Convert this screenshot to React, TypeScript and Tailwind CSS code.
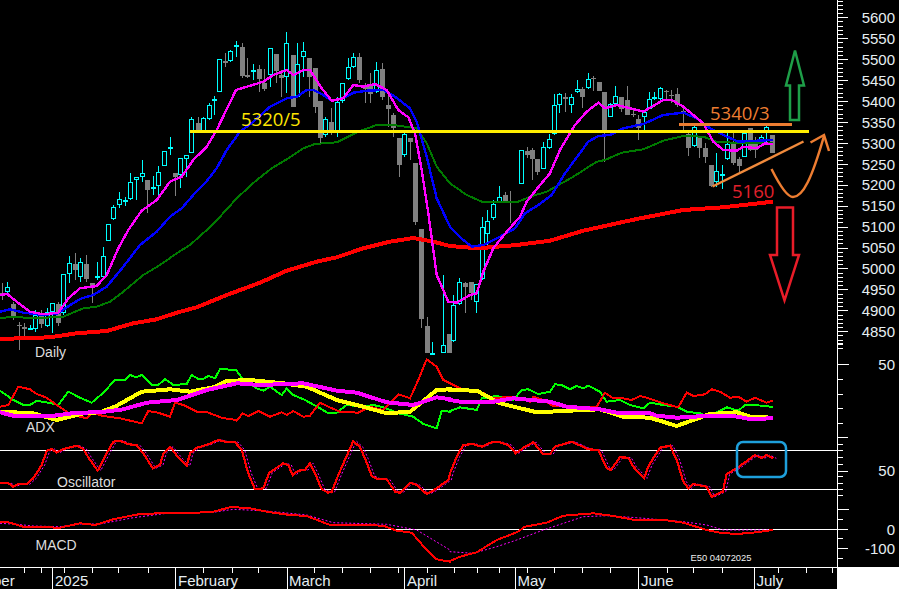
import React from "react";

type C = [number, number, number, number, number, 0 | 1];
// [x, high, top, bottom, low, 1 = cyan / 0 = gray] in 3x crop coordinates
const candlesA: C[] = [
  [6,850,878,886,900,0],[22,845,860,876,880,1],[39,905,912,950,960,0],[56,965,975,978,1050,0],[73,970,982,988,1010,0],[90,975,983,985,990,1],
  [105,930,945,988,995,1],[124,930,945,972,985,0],[140,925,935,977,980,1],[157,910,910,935,998,1],[174,905,912,968,978,0],[190,823,823,940,945,1],
  [207,768,790,823,850,1],[225,760,793,810,840,0],[240,775,785,830,845,1],[259,765,792,837,845,0],[275,850,850,860,908,0],[291,785,829,833,840,1],
  [308,742,767,832,835,1],[325,672,672,724,724,1],[340,615,620,658,660,1],[356,576,598,616,625,1],[374,590,600,604,618,1],[390,520,547,598,600,1],
  [407,530,532,541,600,1],[425,480,520,530,545,1],[442,540,540,570,638,0],[459,528,562,568,585,1],[475,498,517,557,587,1],[491,454,454,497,497,1],
  [509,412,442,446,465,1],[526,520,520,532,587,0],[541,475,475,525,565,1],[558,466,466,478,530,1],[574,350,358,458,460,1],[594,350,370,392,395,0],
  [610,350,355,392,400,1],[627,308,316,356,360,1],[643,288,298,304,345,1],[658,178,178,277,277,1],[675,160,184,188,200,0],[691,150,154,182,185,1],
  [708,124,136,139,170,1],[727,130,142,228,235,0],[742,175,226,230,235,0],[759,192,211,217,240,1],[776,195,208,237,275,0],[793,208,248,266,272,0],
  [810,145,145,225,260,1],[828,163,163,213,250,0],[843,210,225,235,290,0],[859,97,130,232,280,1],[878,165,165,320,320,0],[892,130,193,290,295,1],
  [909,127,154,170,230,1],[928,175,175,230,290,0],[945,205,205,320,340,0],[961,303,303,415,430,0],[976,350,357,404,410,1],[994,325,366,390,405,0],
  [1010,290,305,395,412,1],[1026,248,248,303,310,1],[1043,175,200,238,240,1],[1060,160,172,200,205,1],[1078,160,172,240,250,0],[1094,250,262,268,310,0],
  [1111,220,252,283,310,0],[1128,185,210,277,280,1],[1146,190,208,290,300,0],[1163,280,316,326,380,0],[1179,340,345,385,410,0],[1196,415,415,495,532,0],
  [1211,400,403,466,470,1],[1229,415,415,425,480,0],[1246,490,490,665,675,0],[1263,688,688,957,985,0],[1280,950,978,1058,1058,0],[1296,1025,1058,1058,1058,1],
  [1330,825,1035,1058,1058,1],[1347,1002,1002,1058,1058,0],
];
const candlesB: C[] = [
  [10,885,915,1022,1025,1],[28,835,845,912,915,1],[45,845,850,860,940,0],[63,845,847,880,900,0],[79,853,853,905,938,1],[96,652,682,838,840,1],
  [112,630,662,703,750,1],[129,600,612,655,660,1],[146,558,592,605,608,1],[165,575,585,602,605,0],[181,572,602,604,670,0],[213,451,451,553,553,1],
  [230,442,452,466,475,0],[247,445,451,476,540,0],[262,477,477,515,525,0],[279,425,442,506,508,1],[296,403,418,444,447,1],[312,282,315,403,405,1],
  [328,280,283,316,340,1],[346,280,292,297,335,0],[362,282,290,315,340,1],[380,240,268,276,280,1],[396,262,268,292,325,0],[413,220,238,265,268,1],
  [430,228,234,237,272,0],[446,246,246,272,272,0],[463,275,275,390,485,0],[480,310,312,350,350,1],[496,258,287,312,314,1],[514,292,292,328,335,0],
  [531,258,300,345,345,0],[548,330,342,345,352,0],[565,345,358,385,420,0],[581,330,335,350,390,1],[597,275,298,326,328,1],[613,275,290,298,300,1],
  [630,262,265,298,300,1],[648,270,273,276,300,0],[664,270,285,288,310,0],[682,265,283,314,320,0],[698,325,333,337,390,0],[715,395,403,444,468,0],
  [731,378,380,437,440,1],[748,410,412,444,475,0],[765,430,444,472,490,0],[782,495,495,557,560,0],[798,460,512,545,560,1],[815,495,523,526,567,1],
  [831,400,432,478,480,1],[850,400,432,490,495,0],[866,470,478,497,515,0],[883,390,400,470,472,1],[899,385,385,450,452,0],[915,412,420,450,475,0],
  [932,405,410,430,435,1],[948,378,380,400,425,1],[967,405,405,458,458,0],
];

const P = (a: number[][], b: number[][], yo = 0, dx = 0) =>
  [...a.map(([x, y]) => [x / 3 + dx, (y + yo) / 3]), ...b.map(([x, y]) => [x / 3 + 450 + dx, (y + yo) / 3])]
    .map(([x, y]) => `${x.toFixed(1)},${y.toFixed(1)}`)
    .join(" ");

const maMagenta = P(
  [[0,885],[22,882],[50,905],[90,935],[130,943],[175,938],[205,895],[240,865],[290,858],[320,825],[355,745],[385,690],[425,632],[470,600],[510,545],[545,530],[580,480],[620,440],[650,390],[708,270],[790,245],[820,225],[860,210],[880,225],[910,210],[930,210],[965,265],[995,302],[1030,295],[1060,255],[1090,260],[1125,252],[1160,270],[1195,330],[1225,352],[1245,400],[1265,510],[1285,640],[1310,825],[1345,905]],
  [[0,905],[20,908],[60,885],[80,880],[100,815],[130,745],[170,695],[210,650],[230,605],[270,555],[300,520],[330,450],[375,375],[410,335],[445,308],[465,325],[500,315],[540,325],[580,335],[640,300],[665,300],[700,320],[760,370],[790,425],[820,450],[860,452],[880,440],[920,445],[945,430],[968,433]]
);
const maBlue = P(
  [[0,935],[30,928],[70,938],[130,945],[175,940],[210,915],[245,895],[280,885],[320,860],[370,800],[420,735],[470,695],[510,650],[545,625],[580,585],[615,550],[650,505],[680,450],[720,395],[760,365],[810,320],[860,295],[890,290],[920,270],[940,270],[970,285],[995,302],[1030,295],[1060,278],[1100,272],[1150,270],[1185,290],[1230,325],[1250,365],[1280,470],[1310,595],[1350,680]],
  [[0,680],[30,712],[65,740],[100,735],[150,710],[195,685],[225,640],[265,615],[305,585],[345,520],[415,425],[445,408],[480,405],[520,385],[580,372],[640,345],[700,338],[740,355],[780,385],[820,405],[865,425],[900,423],[968,420]]
);
const maGreen = P(
  [[0,955],[35,950],[100,955],[190,950],[250,925],[290,920],[330,905],[370,875],[430,825],[480,795],[530,760],[570,735],[620,690],[660,650],[710,595],[770,540],[815,505],[860,478],[910,445],[945,432],[1010,427],[1070,397],[1130,375],[1180,375],[1250,385],[1280,430],[1310,500],[1350,550]],
  [[0,550],[50,585],[100,607],[200,607],[240,590],[290,575],[370,530],[440,485],[465,480],[515,458],[580,448],[640,422],[700,408],[760,410],[800,425],[850,428],[968,428]]
);
const maRed = P(
  [[0,1017],[150,1012],[230,1000],[320,993],[400,970],[470,958],[530,938],[590,922],[680,885],[780,848],[860,812],[950,785],[1010,772],[1090,745],[1170,725],[1240,714],[1300,725],[1350,738]],
  [[0,738],[85,745],[200,735],[300,722],[400,692],[560,657],[700,630],[820,622],[968,605]]
);

const adxRed = P(
  [[0,170],[25,165],[55,110],[90,118],[110,132],[140,143],[170,165],[205,188],[240,200],[260,205],[275,188],[310,198],[360,205],[425,220],[445,183],[475,188],[510,200],[525,158],[550,165],[590,185],[620,186],[670,205],[695,207],[710,212],[728,190],[745,198],[775,183],[810,200],[845,187],[860,195],[880,183],[910,200],[930,197],[960,158],[985,170],[1020,185],[1075,188],[1110,170],[1150,180],[1195,133],[1230,145],[1255,90],[1280,28],[1310,50],[1330,90],[1350,100]],
  [[0,100],[30,115],[100,128],[120,145],[190,140],[240,155],[250,140],[275,148],[310,168],[350,170],[400,170],[440,170],[465,128],[490,145],[520,145],[545,150],[570,138],[590,143],[640,160],[685,172],[710,128],[730,138],[765,133],[785,118],[810,125],[840,143],[865,140],[890,155],[915,143],[950,158],[968,152]],
  1050
);
const adxGreen = P(
  [[0,122],[40,150],[70,165],[90,165],[110,152],[155,160],[175,165],[205,125],[240,143],[275,158],[310,128],[345,90],[375,90],[390,75],[408,82],[425,75],[455,105],[475,105],[495,87],[520,105],[560,102],[575,75],[595,87],[610,87],[625,78],[645,85],[660,57],[708,60],[730,90],[770,115],[790,122],[810,110],[845,135],[860,115],[880,135],[915,150],[960,175],[985,190],[1010,188],[1040,165],[1090,170],[1120,165],[1150,172],[1195,190],[1240,200],[1270,222],[1310,235],[1325,183],[1350,185]],
  [[0,183],[30,172],[80,180],[95,145],[140,138],[190,150],[215,120],[235,118],[265,132],[300,125],[315,103],[335,105],[360,118],[380,108],[400,115],[415,107],[450,125],[470,155],[510,150],[540,165],[580,175],[600,158],[640,165],[680,170],[710,185],[750,190],[775,200],[830,172],[865,182],[885,165],[945,167],[968,172]],
  1050
);
const adxYellow = P(
  [[0,185],[100,190],[170,210],[250,190],[300,187],[345,170],[425,125],[510,118],[570,125],[640,112],[680,93],[750,90],[850,100],[920,110],[1010,150],[1090,170],[1160,190],[1230,185],[1310,120],[1350,118]],
  [[0,120],[80,122],[150,160],[260,187],[400,180],[450,178],[520,200],[600,203],[680,228],[780,192],[860,187],[900,200],[968,203]],
  1050
);
const adxMagenta = P(
  [[0,187],[40,197],[155,198],[230,188],[300,187],[370,178],[440,158],[530,150],[620,120],[710,100],[780,105],[910,100],[1010,122],[1070,128],[1160,157],[1240,165],[1310,142],[1350,148]],
  [[0,150],[30,155],[130,155],[190,145],[300,155],[350,170],[450,178],[510,190],[600,190],[620,197],[680,203],[780,197],[850,198],[900,207],[968,205]],
  1050
);

const oscA = [[0,398],[25,400],[40,410],[55,402],[80,403],[100,385],[125,345],[140,303],[155,297],[170,308],[190,297],[230,287],[250,297],[265,322],[293,362],[320,310],[340,275],[360,272],[385,283],[410,285],[430,310],[458,355],[480,345],[490,310],[510,290],[535,322],[560,348],[570,310],[590,293],[620,285],[655,270],[675,275],[705,276],[725,300],[745,370],[765,418],[790,415],[808,368],[850,340],[865,345],[878,375],[895,362],[915,360],[930,340],[945,370],[965,418],[985,428],[995,425],[1015,375],[1060,273],[1080,292],[1095,325],[1115,378],[1135,388],[1160,388],[1185,425],[1200,428],[1230,398],[1250,405],[1280,432],[1300,422],[1345,390],[1350,370]];
const oscB = [[0,370],[20,320],[40,285],[70,282],[95,290],[120,278],[145,275],[175,285],[197,310],[225,290],[250,277],[280,313],[300,313],[315,290],[365,275],[415,298],[445,300],[470,355],[482,360],[510,322],[535,323],[550,350],[582,385],[597,345],[630,293],[660,287],[680,330],[700,395],[715,415],[730,402],[770,410],[785,440],[818,425],[830,372],[860,355],[915,315],[935,325],[950,315],[970,325]];
const macdRed = P(
  [[0,517],[25,517],[70,530],[180,533],[240,520],[285,525],[340,508],[420,492],[480,490],[560,490],[640,485],[690,472],[740,473],[800,485],[870,495],[920,498],[990,525],[1060,524],[1150,527],[1190,542],[1235,548],[1280,600],[1310,628],[1350,635]],
  [[0,633],[30,620],[80,607],[140,570],[200,547],[225,530],[290,518],[340,497],[430,490],[490,498],[560,511],[650,511],[700,518],[770,540],[810,548],[860,552],[920,547],[968,540]],
  1050
);
const macdDot = P(
  [[0,520],[50,523],[100,528],[180,530],[240,522],[300,522],[400,503],[500,490],[640,487],[700,478],[800,483],[920,495],[1000,518],[1160,523],[1250,540],[1350,600]],
  [[0,605],[70,610],[140,590],[200,570],[280,540],[400,500],[470,497],[560,503],[700,515],[770,525],[820,540],[968,540]],
  1050
);

const Candle = ({ c, off }: { c: C; off: number }) => {
  const x = Math.round(c[0] / 3 + off);
  const [h, t, b, l] = [c[1] / 3, c[2] / 3, c[3] / 3, c[4] / 3].map(Math.round);
  const col = c[5] ? "#00ffff" : "#808080";
  return (
    <g shapeRendering="crispEdges">
      <line x1={x + 0.5} x2={x + 0.5} y1={h} y2={l} stroke={col} />
      {c[5] ? (
        <rect x={x - 1.5} y={t + 0.5} width={4} height={Math.max(b - t - 1, 1)} fill="#000" stroke={col} />
      ) : (
        <rect x={x - 2} y={t} width={5} height={Math.max(b - t, 1)} fill={col} />
      )}
    </g>
  );
};

const priceLabels = [5600, 5550, 5500, 5450, 5400, 5350, 5300, 5250, 5200, 5150, 5100, 5050, 5000, 4950, 4900, 4850];
const lowerTicks: [number, number][] = [
  [0,5],[10,5],[25,5],[73,11],[118,5],[163,5],[205,5],[250,5],[292,10],[313,5],[331,5],[352,5],[372,5],[392,10],[408,5],[428,5],[448,5],[466,5],[508,11],[536,5],[568,10],[595,5],[625,10],[655,5],
];
const shortTicks = [24, 41, 64, 92, 118, 148, 203, 232, 258, 314, 342, 370, 398, 427, 454, 477, 499, 527, 554, 582, 610, 667, 693, 722, 778, 806, 832];
const longTicks = [52, 175, 287, 404, 515, 638, 754];
const monthLabels: [string, number][] = [["ber", -7], ["2025", 55], ["February", 178], ["March", 289], ["April", 407], ["May", 517.5], ["June", 641], ["July", 756.5]];

const axisTextClass = "fill-[#e6eef2] font-['Liberation_Sans',sans-serif] text-[15px]";
const noteClass = "font-['Open_Sans',sans-serif] text-[18.5px]";
const labelClass = "fill-[#dddddd] font-['Liberation_Sans',sans-serif] text-[14px]";

export default function App() {
  return (
    <div className="flex h-[589px] w-[899px] overflow-hidden bg-black">
      <div className="flex w-[837px] flex-col">
        <svg width={837} height={567} viewBox="0 0 837 567" className="block" fill="none">
          {candlesA.map((c, i) => <Candle key={i} c={c} off={0} />)}
          {candlesB.map((c, i) => <Candle key={i} c={c} off={450} />)}

          <g shapeRendering="crispEdges">
            <polyline points={maRed} stroke="#ff0000" strokeWidth={4} />
            <polyline points={maGreen} stroke="#007a00" strokeWidth={2} />
            <polyline points={maBlue} stroke="#0000ff" strokeWidth={2.4} />
            <polyline points={maMagenta} stroke="#ff00ff" strokeWidth={2.4} />
          </g>

          <line x1={190} x2={809} y1={131.5} y2={131.5} stroke="#ffee00" strokeWidth={3} />
          <line x1={679} x2={792} y1={124.5} y2={124.5} stroke="#ed7d31" strokeWidth={3} />
          <line x1={712.5} y1={186.5} x2={803.5} y2={141.5} stroke="#f08a3c" strokeWidth={2.5} />
          <path d="M771.5 169 C780 186 787 197 793 197 C803 197 812 178 824 136" stroke="#ed7d31" strokeWidth={2.5} />
          <path d="M810.5 142.5 L824 135 L829 151" stroke="#ed7d31" strokeWidth={2.5} />
          <polygon points="795,50.5 804,85.5 799,85.5 799,120 790,120 790,85.5 786,85.5" stroke="#1e9e48" strokeWidth={2.5} />
          <polygon points="777,207.5 793,207.5 793,255 799,255 784.5,300.5 770,255 777,255" stroke="#e81c28" strokeWidth={2.5} />

          <text x={241} y={126} className={`fill-[#ffe600] ${noteClass}`}>5320/5</text>
          <text x={710} y={119.5} className={`fill-[#ed7d31] ${noteClass}`}>5340/3</text>
          <text x={732} y={197.5} className={`fill-[#e2202c] ${noteClass}`}>5160</text>
          <text x={35} y={357} className={labelClass}>Daily</text>

          <g shapeRendering="crispEdges">
            <polyline points={adxGreen} stroke="#00ff00" strokeWidth={2} />
            <polyline points={adxRed} stroke="#ff0000" strokeWidth={2} />
            <polyline points={adxYellow} stroke="#ffff00" strokeWidth={4} />
            <polyline points={adxMagenta} stroke="#ff00ff" strokeWidth={4} />
          </g>
          <text x={26} y={432} className={labelClass}>ADX</text>

          <line x1={0} x2={837} y1={450.5} y2={450.5} stroke="#fff" shapeRendering="crispEdges" />
          <line x1={0} x2={837} y1={489.5} y2={489.5} stroke="#fff" shapeRendering="crispEdges" />
          <polyline points={P(oscA, oscB, 1050, 3)} stroke="#ff00ff" strokeWidth={1} strokeDasharray="2 2" />
          <polyline points={P(oscA, oscB, 1050)} stroke="#ff0000" strokeWidth={2.2} shapeRendering="crispEdges" />
          <text x={57} y={487} className={labelClass}>Oscillator</text>
          <rect x={737} y={442} width={49} height={35} rx={6} stroke="#1ea0dc" strokeWidth={2.5} />

          <line x1={0} x2={837} y1={529.5} y2={529.5} stroke="#fff" shapeRendering="crispEdges" />
          <polyline points={macdDot} stroke="#ff00ff" strokeWidth={1} strokeDasharray="2 2" />
          <polyline points={macdRed} stroke="#ff0000" strokeWidth={2} shapeRendering="crispEdges" />
          <text x={35.5} y={550} className={labelClass}>MACD</text>
          <text x={690.5} y={561} className="fill-[#eeeeee] font-['Liberation_Sans',sans-serif] text-[9.4px]">E50 04072025</text>
        </svg>

        <svg width={837} height={22} viewBox="0 567 837 22" className="block" fill="none">
          <line x1={0} x2={837} y1={567.5} y2={567.5} stroke="#fff" shapeRendering="crispEdges" />
          {shortTicks.map((x) => (
            <line key={x} x1={x + 0.5} x2={x + 0.5} y1={567} y2={573} stroke="#fff" shapeRendering="crispEdges" />
          ))}
          {longTicks.map((x) => (
            <line key={x} x1={x + 0.5} x2={x + 0.5} y1={567} y2={589} stroke="#fff" shapeRendering="crispEdges" />
          ))}
          {monthLabels.map(([t, x]) => (
            <text key={t} x={x} y={586} className={axisTextClass}>{t}</text>
          ))}
        </svg>
      </div>

      <div className="flex flex-1 flex-col">
        <svg width={62} height={567} viewBox="837 0 62 567" className="block" fill="none">
          <line x1={837.5} x2={837.5} y1={0} y2={567} stroke="#fff" shapeRendering="crispEdges" />
          {Array.from({ length: 83 }, (_, i) => {
            const y = Math.round(17.3 + (i - 4) * 4.186);
            const major = (i - 4) % 5 === 0 && i >= 4 && i - 4 <= 75;
            return (
              <line key={i} x1={838} x2={major ? 848 : 843} y1={y + 0.5} y2={y + 0.5} stroke="#fff" shapeRendering="crispEdges" />
            );
          })}
          {lowerTicks.map(([z, len]) => {
            const y = Math.round(340 + z / 3);
            return (
              <line key={z} x1={838} x2={838 + len} y1={y + 0.5} y2={y + 0.5} stroke="#fff" shapeRendering="crispEdges" />
            );
          })}
          {priceLabels.map((v, i) => (
            <text key={v} x={895} y={23 + i * 20.93} textAnchor="end" className={axisTextClass}>{v}</text>
          ))}
          <text x={895} y={370} textAnchor="end" className={axisTextClass}>50</text>
          <text x={895} y={476} textAnchor="end" className={axisTextClass}>50</text>
          <text x={895} y={535} textAnchor="end" className={axisTextClass}>0</text>
          <text x={895} y={554} textAnchor="end" className={axisTextClass}>-100</text>
        </svg>
        <div className="flex-1 bg-white" />
      </div>
    </div>
  );
}
